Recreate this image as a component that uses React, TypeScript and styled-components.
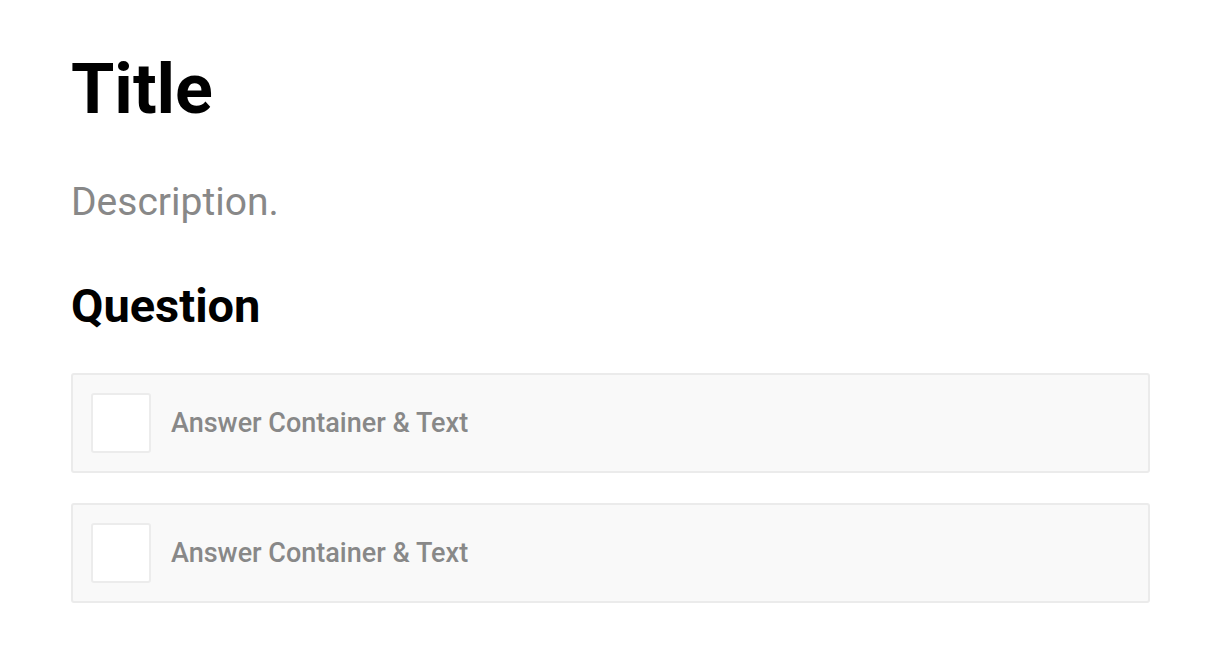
import React from 'react';
import styled, { createGlobalStyle } from 'styled-components';

const GlobalStyle = createGlobalStyle`
  html, body {
    margin: 0;
    padding: 0;
    background: #fff;
    font-family: Roboto, "Liberation Sans", Arial, sans-serif;
  }
`;

const answers = ['Answer Container & Text', 'Answer Container & Text'];

export default function App() {
  return (
    <>
      <GlobalStyle />
      <Page>
        <Title>Title</Title>
        <Desc>Description.</Desc>
        <Question>Question</Question>
        <Answers>
          {answers.map((a, i) => (
            <Answer key={i}>
              <Check />
              <AnswerText>{a}</AnswerText>
            </Answer>
          ))}
        </Answers>
      </Page>
    </>
  );
}

const Page = styled.div`
  display: flex;
  flex-direction: column;
  padding: 47px 70px 40px 71px;
`;
const Title = styled.h1`
  margin: 0;
  font-size: 70px;
  line-height: 1.2;
  font-weight: 700;
  color: #000;
`;
const Desc = styled.p`
  margin: 48px 0 0;
  font-size: 39px;
  line-height: 1.2;
  font-weight: 400;
  color: #888;
`;
const Question = styled.h2`
  margin: 52px 0 0;
  font-size: 47px;
  line-height: 1.2;
  font-weight: 700;
  color: #000;
`;
const Answers = styled.div`
  display: flex;
  flex-direction: column;
  gap: 30px;
  margin-top: 39px;
`;
const Answer = styled.label`
  display: flex;
  align-items: center;
  gap: 20px;
  height: 100px;
  box-sizing: border-box;
  padding: 0 18px;
  background: #f9f9f9;
  border: 2px solid #ebebeb;
  border-radius: 3px;
`;
const Check = styled.span`
  width: 60px;
  height: 60px;
  box-sizing: border-box;
  background: #fff;
  border: 2px solid #ececec;
  border-radius: 3px;
`;
const AnswerText = styled.span`
  font-size: 27px;
  font-weight: 500;
  color: #888;
`;
